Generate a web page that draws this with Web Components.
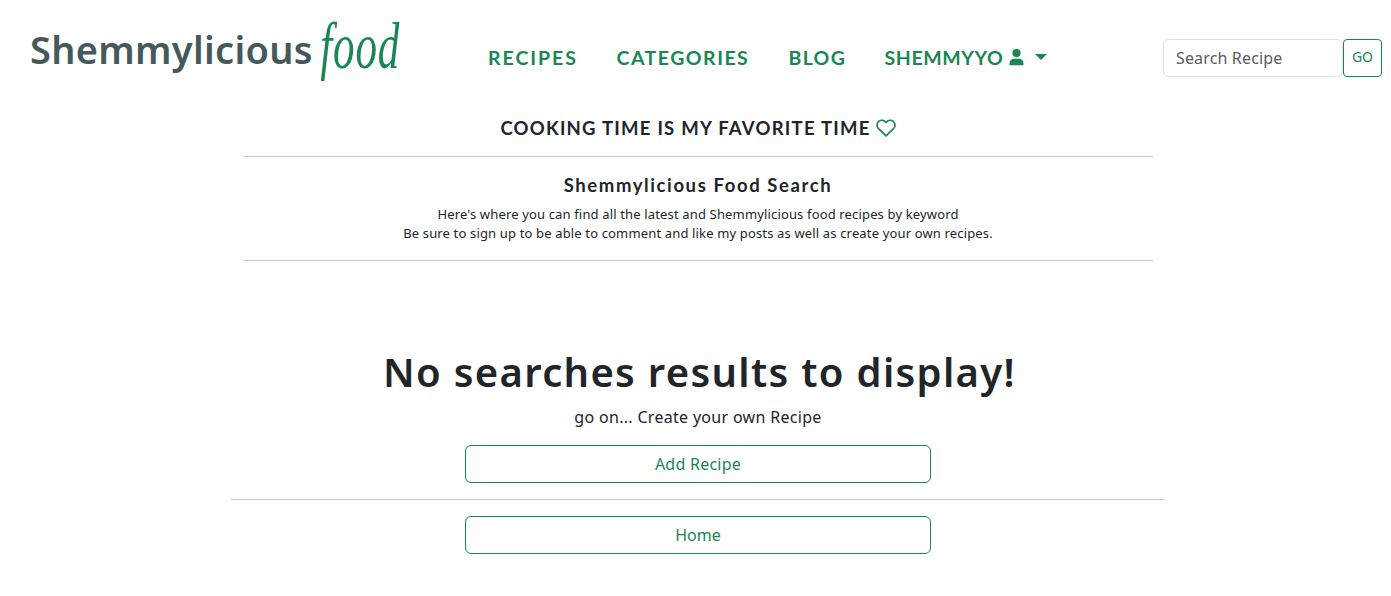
<!DOCTYPE html>
<html lang="en"><head><meta charset="utf-8"><title>Shemmylicious Food</title>
<style>
html,body{margin:0;overflow:hidden;background:#fff}
body{height:596px;color:#212529;font:400 16px/24px "Noto Sans",sans-serif;--green:#198754;--display:Lato,sans-serif}
</style></head><body>
<food-page></food-page>
<script>
const define=(name,html)=>customElements.define(name,class extends HTMLElement{
  constructor(){super();this.attachShadow({mode:'open'}).innerHTML=html;}
});

define('brand-logo',`<style>
:host{display:flex;align-items:flex-start;width:370px;height:107px;margin-left:30px;white-space:nowrap}
.name{font:600 38px/52px "Noto Sans",sans-serif;letter-spacing:.3px;color:#45595d;width:287px;margin-top:23px}
.script{font:italic 400 43px/50px "Liberation Serif",serif;letter-spacing:.8px;color:var(--green);margin:29px 0 0 4px;transform:scaleY(1.5);transform-origin:0 40px}
</style><span class="name">Shemmylicious</span><span class="script">food</span>`);

define('nav-link',`<style>
:host{display:flex;align-items:center;white-space:nowrap;font:700 19.5px/30px var(--display);color:var(--green);letter-spacing:var(--ls,1px);width:var(--w,auto)}
</style><slot></slot>`);

define('user-icon',`<style>:host{display:block;width:15px;height:17px}svg{display:block}</style>
<svg width="15" height="17" viewBox="0 0 15 17" fill="#198754"><circle cx="7.5" cy="4.1" r="4.1"/><path d="M.5 15.8V14.5C.5 11.7 2.5 9.8 5 9.8h5c2.5 0 4.5 1.9 4.5 4.7v1.3q0 .5-.6.5H1.1q-.6 0-.6-.5z"/></svg>`);

define('drop-caret',`<style>:host{display:block;border:6px solid transparent;border-top-color:var(--green);border-bottom:0}</style>`);

define('heart-icon',`<style>:host{display:block;width:20px;height:18px}svg{display:block}</style>
<svg width="20" height="18" viewBox="0 0 20 18" fill="none" stroke="#198754" stroke-width="1.7" stroke-linejoin="round"><path d="M10 3.5C7.9 1 5 .6 3 2.2.5 4.2.4 7.5 2.5 9.7L10 16.9l7.5-7.2c2.1-2.2 2-5.5-.5-7.5-2-1.6-4.9-1.2-7 1.3z"/></svg>`);

define('search-box',`<style>
:host{display:flex;width:219px;height:38px;margin:39px 0 0 auto}
.field{box-sizing:border-box;width:180px;border:1px solid #dee2e6;border-radius:6px;padding:6px 12px;color:#575c61;letter-spacing:.15px}
.go{box-sizing:border-box;width:39px;border:1px solid #198754;border-radius:4px;color:#198754;font-size:14px;line-height:34px;text-align:center}
</style><div class="field">Search Recipe</div><div class="go">GO</div>`);

define('outline-button',`<style>
:host{display:block;box-sizing:border-box;width:466px;height:38px;margin:0 auto;border:1px solid #198754;border-radius:6px;color:#198754;text-align:center;line-height:36px;letter-spacing:var(--ls,0)}
</style><slot></slot>`);

define('rule-line',`<style>:host{display:block;width:var(--w,910px);height:1px;margin:0 auto;background:#c8c9ca}</style>`);

define('site-header',`<style>
:host{display:flex;height:107px;width:1382px}
nav{display:flex;align-items:flex-start;margin:43px 0 0 88px}
user-icon{margin:-2px 0 0 6px}drop-caret{margin:-2px 0 0 11px}
</style>
<brand-logo></brand-logo>
<nav><nav-link style="--ls:1.98px;--w:128.5px">RECIPES</nav-link><nav-link style="--ls:1.5px;--w:172px">CATEGORIES</nav-link><nav-link style="--ls:1.3px;--w:96px">BLOG</nav-link><nav-link style="--ls:.6px">SHEMMYYO<user-icon></user-icon><drop-caret></drop-caret></nav-link></nav>
<search-box></search-box>`);

define('page-intro',`<style>
:host{display:block;text-align:center;white-space:nowrap}
h2,h3,p{margin:0}
h2,h3{font:700 18.5px/24px var(--display)}
h2{display:flex;justify-content:center;align-items:center;gap:5px;letter-spacing:1.244px;padding:9px 0 16px}
h3{letter-spacing:1.596px;padding:16px 0 8px}
p{font-size:13px;line-height:19px;letter-spacing:.152px;padding-bottom:17px}
</style>
<h2>COOKING TIME IS MY FAVORITE TIME<heart-icon></heart-icon></h2><rule-line></rule-line>
<h3>Shemmylicious Food Search</h3>
<p>Here's where you can find all the latest and Shemmylicious food recipes by keyword<br>Be sure to sign up to be able to comment and like my posts as well as create your own recipes.</p><rule-line></rule-line>`);

define('empty-results',`<style>
:host{display:block;text-align:center;padding-top:87px;white-space:nowrap}
h1,p{margin:0}
h1{font:600 40px/48px "Noto Sans",sans-serif;letter-spacing:1.32px;padding-left:3px}
p{padding:9px 0 16px;letter-spacing:.308px}
rule-line{margin:16px auto}
</style>
<h1>No searches results to display!</h1><p>go on... Create your own Recipe</p>
<outline-button style="--ls:.25px">Add Recipe</outline-button><rule-line style="--w:934px"></rule-line><outline-button>Home</outline-button>`);

define('food-page',`<style>:host{display:block;width:1396px}</style>
<site-header></site-header><page-intro></page-intro><empty-results></empty-results>`);
</script></body></html>
